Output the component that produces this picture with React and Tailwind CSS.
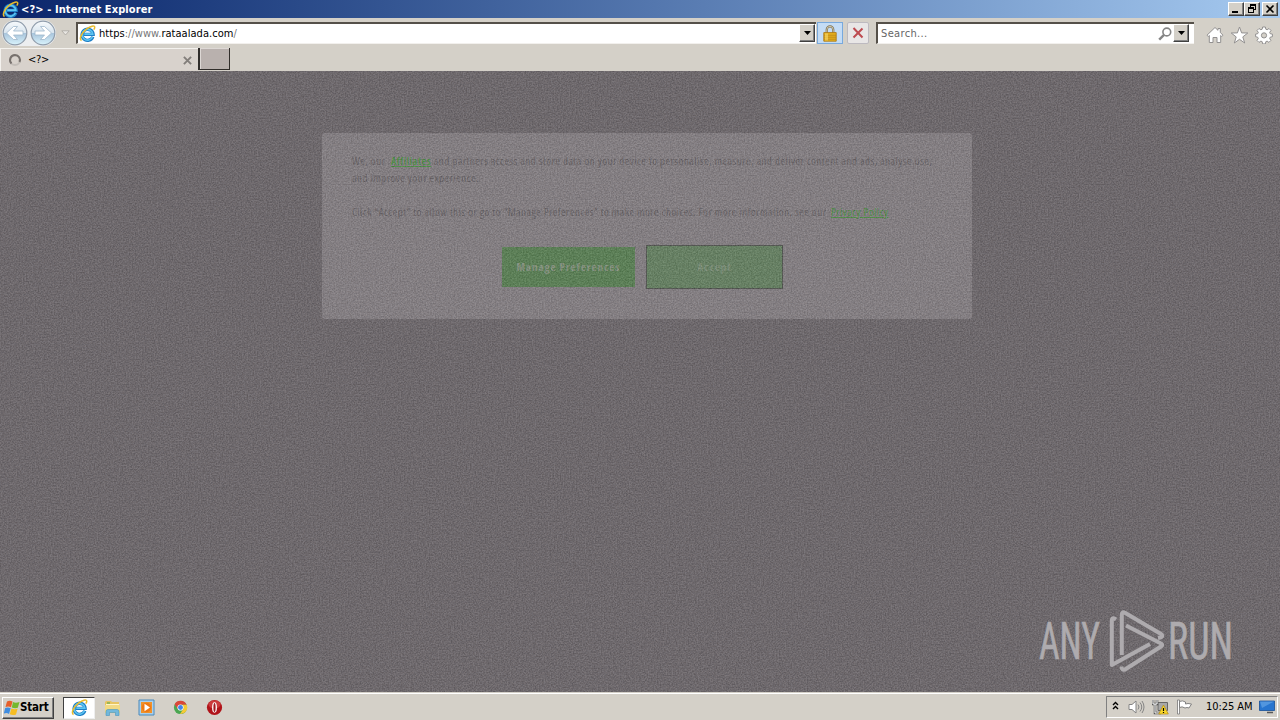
const raised = "border border-t-white border-l-white border-r-[#404040] border-b-[#404040] bg-[#d4d0c8] shadow-[inset_-1px_-1px_0_#808080]"

function IeLogo({ className }) {
  return (
    <svg viewBox="0 0 16 16" className={className} fill="none">
      <path d="M13 11A5.200 5.200 0 1 1 13.300 8.900H4.600" stroke="#1f7fc6" strokeWidth="3.100" />
      <path d="M12.700 11A5 5 0 1 1 13 8.600H5" stroke="#5cc5f2" strokeWidth="1.500" />
      <path d="M2.400 14.600C-.4 13.300 2.600 7.300 7.300 3.700 10.900.9 14.600.2 14.800 1.900c.1.700-.3 1.600-.9 2.500" stroke="#e9bb2c" strokeWidth="1.400" />
    </svg>
  )
}

function NavArrow({ flip }) {
  return (
    <svg viewBox="0 0 26 26" className={`w-[26px] h-[26px] shrink-0 ${flip ? "-scale-x-100" : ""}`}>
      <defs>
        <linearGradient id="orb" x1="0" y1="0" x2="0" y2="1">
          <stop offset="0" stopColor="#f7fafc" />
          <stop offset=".48" stopColor="#d9e5ef" />
          <stop offset=".52" stopColor="#a9c5dc" />
          <stop offset="1" stopColor="#d9f3fc" />
        </linearGradient>
      </defs>
      <circle cx="13" cy="13" r="11.800" fill="url(#orb)" stroke="#8f9cab" strokeWidth="1.200" />
      <path d="M4.500 13l7-6.500h4L11.500 11H21v4h-9.500l4 4.500h-4z" fill="#fff" stroke="#9fb8cc" strokeWidth=".8" />
    </svg>
  )
}

function DropButton() {
  return (
    <div className={`w-[16px] h-[18px] flex items-center justify-center shrink-0 ${raised}`}>
      <svg viewBox="0 0 7 4" className="w-[7px] h-[4px]"><path d="M0 0h7L3.500 4z" fill="#000" /></svg>
    </div>
  )
}

function TitleBar() {
  return (
    <div className="h-[18px] flex items-center pl-[2px] pr-[2px] bg-gradient-to-r from-[#0a246a] to-[#a6caf0]">
      <IeLogo className="w-[17px] h-[17px]" />
      <span className="ml-[2px] mt-px text-white font-bold text-[11px] leading-[17px] tracking-[0.1px] whitespace-nowrap">&lt;?&gt; - Internet Explorer</span>
      <div className="ml-auto flex">
        <div className={`w-[16px] h-[14px] ${raised}`}>
          <svg viewBox="0 0 14 12" className="w-[14px] h-[12px]"><path d="M3 8h6v2H3z" /></svg>
        </div>
        <div className={`w-[16px] h-[14px] ${raised}`}>
          <svg viewBox="0 0 14 12" className="w-[14px] h-[12px]" fill="none" stroke="#000" shapeRendering="crispEdges">
            <path d="M5.500 4V1.500h5v5H9M5 2h6M3.500 4.500h5v5h-5zM3 5h6" />
          </svg>
        </div>
        <div className={`w-[16px] h-[14px] ml-[2px] ${raised}`}>
          <svg viewBox="0 0 14 12" className="w-[14px] h-[12px]"><path d="M3.500 2.500l7 7M10.500 2.500l-7 7" stroke="#000" strokeWidth="1.600" /></svg>
        </div>
      </div>
    </div>
  )
}

function AddressRow() {
  return (
    <div className="h-[30px] flex items-center pl-[2px]">
      <div className="flex gap-[2px] rounded-full bg-[#eceef0]">
        <NavArrow />
        <NavArrow flip />
      </div>
      <svg viewBox="0 0 9 6" className="w-[9px] h-[6px] ml-[5px]"><path d="M.8.8h7.400L4.500 5z" fill="#e8e6e2" stroke="#aaa6a0" strokeWidth=".8" /></svg>
      <div className="ml-[6px] w-[740px] h-[22px] flex items-center bg-white border-t-2 border-l-2 border-t-[#555049] border-l-[#555049] border-b border-b-[#f2f0ed]">
        <IeLogo className="w-[17px] h-[17px] ml-[1px]" />
        <span className="ml-[3px] mt-px text-[11px] tracking-[0.04px] text-[#777] whitespace-nowrap"><span className="text-black">https</span>://www.<span className="text-black">rataalada.com</span>/</span>
        <div className="ml-auto mr-[1px] mb-px"><DropButton /></div>
      </div>
      <div className="ml-[1px] w-[26px] h-[22px] flex items-center justify-center bg-[#c4dcf5] border border-[#78a9dd]">
        <svg viewBox="0 0 14 17" className="w-[14px] h-[17px]">
          <path d="M3.800 8V4.600a3.200 3.200 0 0 1 6.400 0V8" fill="none" stroke="#7d7355" strokeWidth="2.300" />
          <path d="M3.800 8V4.600a3.200 3.200 0 0 1 6.400 0V8" fill="none" stroke="#d8ceb2" strokeWidth=".9" />
          <path d="M.8 7.600h12.400v8.600H.8z" fill="#e7b21e" stroke="#ae7915" strokeWidth=".9" />
          <path d="M1 10.200h12M1 12.200h12M1 14.200h12" stroke="#b98218" strokeWidth=".8" />
          <path d="M2 8.400h3v7H2z" fill="#ffe477" opacity=".55" />
        </svg>
      </div>
      <div className="ml-[4px] w-[22px] h-[22px] flex items-center justify-center bg-[#e8e6e6] border border-[#bdbac0] rounded-[2px]">
        <svg viewBox="0 0 12 12" className="w-[12px] h-[12px]"><path d="M1.500 1l9 9.500M10.500 1.500l-9 9" stroke="#bd4b50" strokeWidth="2" /></svg>
      </div>
      <div className="ml-[7px] w-[318px] h-[22px] flex items-center bg-white border-t-2 border-l-2 border-t-[#555049] border-l-[#555049] border-b border-b-[#f2f0ed]">
        <span className="ml-[3px] mt-px text-[11px] text-[#666] tracking-[0.35px]">Search...</span>
        <svg viewBox="0 0 14 14" className="ml-auto w-[14px] h-[14px]" fill="none" stroke="#858585">
          <circle cx="8.800" cy="5" r="3.900" strokeWidth="1.600" />
          <path d="M6 7.800L1.200 12.600" strokeWidth="2.400" />
        </svg>
        <div className="ml-[1px] mr-[5px] mb-px"><DropButton /></div>
      </div>
      <div className="ml-[12px] flex items-center gap-[6px] pt-[3px]">
        <svg viewBox="0 0 18 18" className="w-[18px] h-[18px]" fill="#fff" stroke="#929090" strokeWidth="1">
          <path d="M1 9.200L9 1.500l3 2.800V2.500h2.300v4L17 9.200l-1.300 1.300-1-1v7H11v-5H7v5H3.300v-7l-1 1z" />
        </svg>
        <svg viewBox="0 0 19 18" className="w-[19px] h-[18px]" fill="#fff" stroke="#929090" strokeWidth="1">
          <path d="M9.500 1l2.100 5.900 6.200.1-5 3.900 1.900 6.100-5.200-3.700L4.300 17l1.900-6.100-5-3.900 6.200-.1z" />
        </svg>
        <svg viewBox="0 0 18 18" className="w-[18px] h-[18px]" fill="#fff" stroke="#929090" strokeWidth="1">
          <path d="M7.600 1h2.800l.4 2.200 1.300.6L14 2.500l2 2-1.300 1.900.5 1.300 2.200.4v2.600l-2.200.5-.5 1.300 1.200 1.900-2 2-1.800-1.300-1.300.6-.4 2.200H7.600l-.4-2.200-1.300-.6L4 16.400l-2-2 1.300-1.900-.6-1.300-2.100-.5V8.100l2.100-.4.6-1.300L2 4.500l2-2 1.900 1.300 1.300-.6z" />
          <circle cx="9" cy="9.400" r="2.600" fill="#d4d0c8" />
        </svg>
      </div>
    </div>
  )
}

function TabRow() {
  return (
    <div className="h-[23px] flex">
      <div className="w-[198px] h-[23px] flex items-center pl-[7px] pr-[6px] border-l border-t border-[#f4f2ee] bg-[#d8d2cc]">
        <svg viewBox="0 0 14 14" className="w-[14px] h-[14px]" fill="none" strokeWidth="2">
          <circle cx="7" cy="7" r="5" stroke="#c2bdb8" />
          <path d="M3.500 10.500A5 5 0 0 1 7 2a5 5 0 0 1 4.500 7" stroke="#77716d" />
        </svg>
        <span className="ml-[6px] mt-px text-[11px] tracking-[-0.3px]">&lt;?&gt;</span>
        <svg viewBox="0 0 8 8" className="w-[9px] h-[9px] ml-auto"><path d="M.8.800l6.400 6.400M7.200.8L.8 7.200" stroke="#827e7a" strokeWidth="1.700" /></svg>
      </div>
      <div className="w-[32px] h-[22px] border-l-2 border-r border-b border-[#302d2a] bg-[#b9b1ae] shadow-[inset_1px_1px_0_#ddd8d5]" />
    </div>
  )
}

function Grain() {
  return (
    <svg className="absolute inset-0 w-full h-full pointer-events-none">
      <filter id="grain" x="0" y="0" width="100%" height="100%" colorInterpolationFilters="sRGB">
        <feTurbulence type="fractalNoise" baseFrequency="0.68" numOctaves="2" seed="11" />
        <feColorMatrix values="1.700 .4 0 0 -.5  1.700 .3 .1 0 -.52  1.700 .2 .2 0 -.52  0 0 0 0 .12" />
      </filter>
      <rect width="100%" height="100%" filter="url(#grain)" />
    </svg>
  )
}

function ConsentDialog() {
  return (
    <div className="mt-[62px] ml-[322px] w-[650px] h-[186px] rounded-[2px] bg-[#827d81] pt-[19px] px-[30px] font-['Open_Sans',sans-serif] text-[11px] leading-[17px] tracking-[0.49px] text-[#625d61]">
      <div className="whitespace-nowrap">
        We, our <span className="ml-[3px] text-[#478e40] underline font-semibold">Affiliates</span> and partners access and store data on your device to personalise, measure, and deliver content and ads, analyse use,
        <br />
        and improve your experience.
      </div>
      <div className="mt-[17px] whitespace-nowrap">
        Click “Accept” to allow this or go to “Manage Preferences” to make more choices. For more information, see our <span className="ml-[2px] text-[#478e40] underline">Privacy Policy</span>
      </div>
      <div className="mt-[25px] ml-[150px] flex items-center gap-[11px] font-bold tracking-[0.95px] text-[#84917f]">
        <div className="w-[133px] h-[40px] flex items-center justify-center bg-[#567e51] pb-[2px] whitespace-nowrap">Manage Preferences</div>
        <div className="w-[137px] h-[44px] flex items-center justify-center bg-[#627f5f] border border-[#4d514c] text-[#7a8e77] pb-[2px]">Accept</div>
      </div>
    </div>
  )
}

function Watermark() {
  return (
    <div className="absolute left-[1038px] top-[538px] w-[240px] h-[80px] text-[#aeabae]">
      <svg viewBox="0 0 240 80" className="w-full h-full overflow-visible">
        <g fill="currentColor" stroke="currentColor" strokeWidth=".6" fontFamily="'Liberation Sans Narrow', 'Roboto', sans-serif" fontSize="51">
          <text x="1" y="49.500" textLength="61" lengthAdjust="spacingAndGlyphs">ANY</text>
          <text x="130" y="49.500" textLength="65" lengthAdjust="spacingAndGlyphs">RUN</text>
        </g>
        <g fill="none" stroke="currentColor" strokeWidth="4" strokeLinejoin="round">
          <path d="M78 10.500Q73.800 7.500 73.800 12v44L112 35" />
          <path d="M83.800 46V6q0-4 3.500-2L123 25q3.500 3-3 4" />
          <path d="M88 16.500L123 34.500q2.500 1.500 0 3L87 60.500q-3.500 1-3.500-3" />
        </g>
      </svg>
    </div>
  )
}

function Taskbar() {
  return (
    <div className="h-[28px] flex items-center bg-[#d4d0c8] border-t border-[#d4d0c8] shadow-[inset_0_1px_0_#fff] pl-[2px] pr-[2px]">
      <div className={`w-[52px] h-[22px] flex items-center pl-[1px] mt-[2px] ${raised}`}>
        <svg viewBox="0 0 16 16" className="w-[16px] h-[16px]">
          <path d="M3 1.500q2.500-1.500 5.500 0L7 7.200Q4.500 6 1.500 7z" fill="#e65f2a" />
          <path d="M9 2q2.500 1.500 6.500 0l-1.700 5.700q-3 1-6-.3z" fill="#75b82f" />
          <path d="M1.200 8Q4 7 6.700 8.300L5 14Q3 12.500-.2 13.500z" fill="#3f8de0" />
          <path d="M7.400 8.500q3 1.300 6.200.3L12 14.500q-3 1.200-6.200-.2z" fill="#f6bd22" />
        </svg>
        <span className="text-[11.500px] font-bold tracking-[-0.2px] ml-0">Start</span>
      </div>
      <div className="ml-[9px] mt-[2px] w-[32px] h-[22px] flex items-center justify-center bg-white border border-t-[#404040] border-l-[#404040] border-r-[#eee] border-b-[#eee]">
        <IeLogo className="w-[17px] h-[17px]" />
      </div>
      <div className="ml-[9px] mt-[2px] flex items-center gap-[17px]">
        <svg viewBox="0 0 17 17" className="w-[17px] h-[17px]">
          <path d="M1 3l1-1h5l1 1h7v10H1z" fill="#e7c462" />
          <path d="M2 5h13v3H2z" fill="#fff5c7" />
          <path d="M1 6h15v8H1z" fill="#f1d984" />
          <path d="M2 16.500v-4q0-2 2-2h9q2 0 2 2v4h-3.500v-3h-6v3z" fill="#71b8dc" stroke="#4a95bd" strokeWidth=".6" />
          <path d="M3 4h3" stroke="#4ca64a" />
        </svg>
        <svg viewBox="0 0 17 17" className="w-[17px] h-[17px]">
          <path d="M1 1h15v15H1z" fill="#a9cfed" stroke="#4b8abb" />
          <path d="M3 3h11v11H3z" fill="#f0922a" />
          <circle cx="8.500" cy="8.500" r="4.700" fill="#ef7914" />
          <path d="M6.500 4.800v7.400l5.500-3.700z" fill="#fff" />
        </svg>
        <svg viewBox="0 0 16 16" className="w-[17px] h-[15px]">
          <circle cx="8" cy="8" r="7" fill="#4aa651" />
          <path d="M1.700 4.500A7.200 7.200 0 0 1 14.500 5H8L5 9.500z" fill="#db4639" />
          <path d="M14.500 5A7 7 0 0 1 7.500 15L11 9.500 10 5z" fill="#f6ca35" />
          <circle cx="8" cy="8" r="3.300" fill="#fff" />
          <circle cx="8" cy="8" r="2.600" fill="#4285e8" />
        </svg>
        <svg viewBox="0 0 17 17" className="w-[17px] h-[17px]">
          <circle cx="8.500" cy="8.500" r="7.600" fill="#b01319" />
          <ellipse cx="8.500" cy="5.500" rx="6" ry="4" fill="#d84b4b" opacity=".7" />
          <ellipse cx="8.500" cy="8.500" rx="2.400" ry="5.200" fill="#fff" />
          <ellipse cx="8.500" cy="8.500" rx="1.100" ry="4.500" fill="#a31820" />
        </svg>
      </div>
      <div className="ml-auto mt-[1px] w-[172px] h-[22px] flex items-center border border-t-[#808080] border-l-[#808080] border-r-white border-b-white pl-[5px]">
        <svg viewBox="0 0 7 9" className="w-[7px] h-[9px] mb-[3px]" fill="none" stroke="#000" strokeWidth="1.400"><path d="M1 4l2.500-2.500L6 4M1 8l2.500-2.500L6 8" /></svg>
        <svg viewBox="0 0 17 16" className="w-[17px] h-[16px] ml-[9px]" fill="none" stroke="#848484">
          <path d="M1 5.500h3L8 2v12l-4-3.500H1z" fill="#fff" />
          <path d="M10 5.500q2 2.500 0 5M12 3.500q3.500 4.500 0 9M14 2q4 6 0 12" />
        </svg>
        <svg viewBox="0 0 17 16" className="w-[17px] h-[16px] ml-[7px]">
          <path d="M6 3.500h9.500v8H6z" fill="#a8a8a8" stroke="#666" />
          <path d="M1 1v4h4V1M3 5v9h6" fill="none" stroke="#555" strokeWidth="2.500" />
          <path d="M1 1v4h4V1M3 5v9h6" fill="none" stroke="#fff" />
          <path d="M11.500 6l4.800 9H6.700z" fill="#f8d629" stroke="#b58b12" strokeWidth=".7" />
          <path d="M11.500 9v3M11.500 13v1" stroke="#000" strokeWidth="1.200" />
        </svg>
        <svg viewBox="0 0 17 16" className="w-[17px] h-[16px] ml-[7px]">
          <path d="M1.500 1h2v14h-2z" fill="#fff" stroke="#777" strokeWidth=".8" />
          <path d="M3.500 2.500q3-1.500 6 .5v2q2-1 6 0l-2.500 4q-2-1-4 0-3-2-5.500-.5z" fill="#fff" stroke="#777" strokeWidth=".9" />
        </svg>
        <span className="ml-[13px] mt-px text-[11px] whitespace-nowrap tracking-[-0.05px]">10:25 AM</span>
        <svg viewBox="0 0 16 14" className="w-[16px] h-[14px] ml-auto mr-[2px]">
          <path d="M.5 1h15v9.500H.5z" fill="#2875cf" stroke="#174f96" strokeWidth=".8" />
          <path d="M1 1.500h14L3 8z" fill="#6eacea" opacity=".6" />
          <path d="M8 12.500h6" stroke="#58585a" strokeWidth="1.500" />
        </svg>
      </div>
    </div>
  )
}

export default function App() {
  return (
    <div className="w-[1280px] h-[720px] overflow-hidden flex flex-col bg-[#d4d0c8] text-black font-['DejaVu_Sans_Condensed','DejaVu_Sans',sans-serif] [font-stretch:condensed]">
      <TitleBar />
      <AddressRow />
      <TabRow />
      <main className="relative h-[621px] flow-root bg-[#6a6569]">
        <ConsentDialog />
        <Grain />
        <Watermark />
      </main>
      <Taskbar />
    </div>
  )
}
